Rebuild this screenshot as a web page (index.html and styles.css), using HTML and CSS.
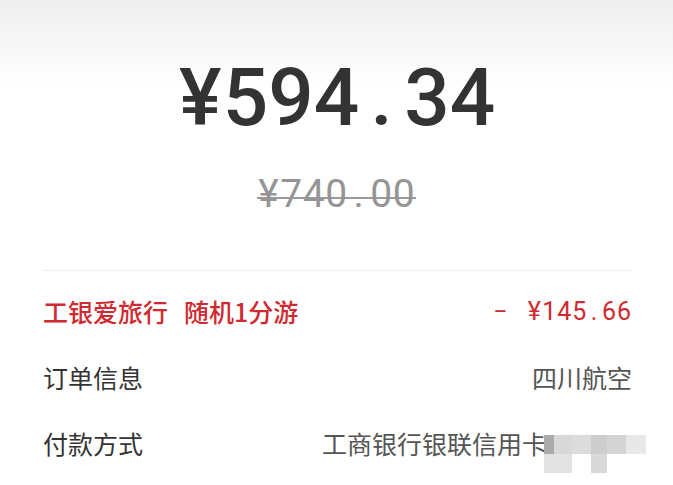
FILE: index.html
```html
<!DOCTYPE html>
<html lang="zh-CN">
<head>
<meta charset="utf-8">
<title>订单</title>
<link rel="stylesheet" href="styles.css">
</head>
<body>
<div class="page">
  <div class="hero">
    <div class="price"><span class="cell">¥</span>594<span class="cell">.</span>34</div>
    <div class="orig"><span class="orig-num"><span class="cell">¥</span>740<span class="cell">.</span>00</span></div>
  </div>
  <div class="list">
    <div class="row promo">
      <span class="promo-label">工银爱旅行<span class="promo-sub">随机1分游</span></span>
      <span class="promo-amt"><span class="cell minus">−</span><span class="cell"> </span><span class="cell">¥</span>145<span class="cell">.</span>66</span>
    </div>
    <div class="row">
      <span class="label">订单信息</span>
      <span class="value">四川航空</span>
    </div>
    <div class="row">
      <span class="label">付款方式</span>
      <span class="value pay">工商银行银联信用卡<span class="mosaic">
        <i class="m1"></i><i class="m2"></i><i class="m3"></i><i class="m4"></i><i class="m5"></i><i class="m6"></i>
        <i class="m7"></i><i class="m8"></i><i class="m0"></i><i class="m9"></i><i class="m0"></i><i class="m0"></i>
      </span></span>
    </div>
  </div>
</div>
</body>
</html>
```
FILE: styles.css
```css
* { box-sizing: border-box; }
html, body { margin: 0; padding: 0; }
body {
  width: 673px;
  height: 485px;
  overflow: hidden;
  font-family: Roboto, "Noto Sans CJK SC", sans-serif;
  background: linear-gradient(#eeeeee 0px, #f6f6f6 40px, #fcfcfc 70px, #ffffff 95px);
}
.page { display: flex; flex-direction: column; }

.hero {
  display: flex;
  flex-direction: column;
  align-items: center;
  padding-top: 58px;
}
.price {
  font-family: Roboto, sans-serif;
  font-weight: 500;
  font-size: 80px;
  line-height: 80px;
  height: 80px;
  color: #333333;
  white-space: nowrap;
}
.price .cell {
  display: inline-block;
  width: 45px;
  text-align: center;
}
.orig {
  margin-top: 37px;
  height: 39px;
}
.orig-num {
  display: inline-block;
  font-family: Roboto, sans-serif;
  font-weight: 400;
  font-size: 39px;
  line-height: 39px;
  letter-spacing: 0.6px;
  color: #959595;
  padding: 0 1px;
  background: linear-gradient(#9a9a9a, #9a9a9a) no-repeat 0 22px / 100% 2px;
  white-space: nowrap;
}
.orig-num .cell {
  display: inline-block;
  width: 22.6px;
  text-align: center;
}

.list {
  margin: 56px 41px 0 42px;
  border-top: 1px solid #efefef;
  padding-top: 7px;
  display: flex;
  flex-direction: column;
}
.row {
  height: 66px;
  display: flex;
  align-items: center;
  justify-content: space-between;
  font-family: "Noto Sans CJK SC", sans-serif;
  font-size: 25px;
  line-height: 1;
  white-space: nowrap;
}
.promo { color: #cf2a30; }
.promo-label { font-weight: 500; padding-left: 1px; }
.promo-sub { margin-left: 16px; }
.promo-amt {
  font-family: Roboto, sans-serif;
  font-size: 25px;
  letter-spacing: 0.9px;
  color: #cf2a30;
}
.promo-amt .cell {
  display: inline-block;
  width: 15px;
  text-align: center;
}
.promo-amt .minus { width: 19px; text-align: left; }
.label { color: #333333; padding-left: 1px; }
.value { color: #555555; }
.pay { position: relative; padding-right: 85px; }
.mosaic {
  position: absolute;
  left: 222px;
  top: 4px;
  width: 102px;
  height: 38px;
  display: grid;
  grid-template-columns: 10px 18px 19px 16px 19px 20px;
  grid-template-rows: 19px 19px;
}
.mosaic i { display: block; }
.m1 { background: #ababab; }
.m2 { background: #d8d8d8; }
.m3 { background: #dcdcdc; }
.m4 { background: #cdcdcd; }
.m5 { background: #d4d4d4; }
.m6 { background: #e8e8e8; }
.m7 { background: #e3e3e3; }
.m8 { background: #e3e3e3; }
.m9 { background: #d8d8d8; }
.m0 { background: transparent; }
```
